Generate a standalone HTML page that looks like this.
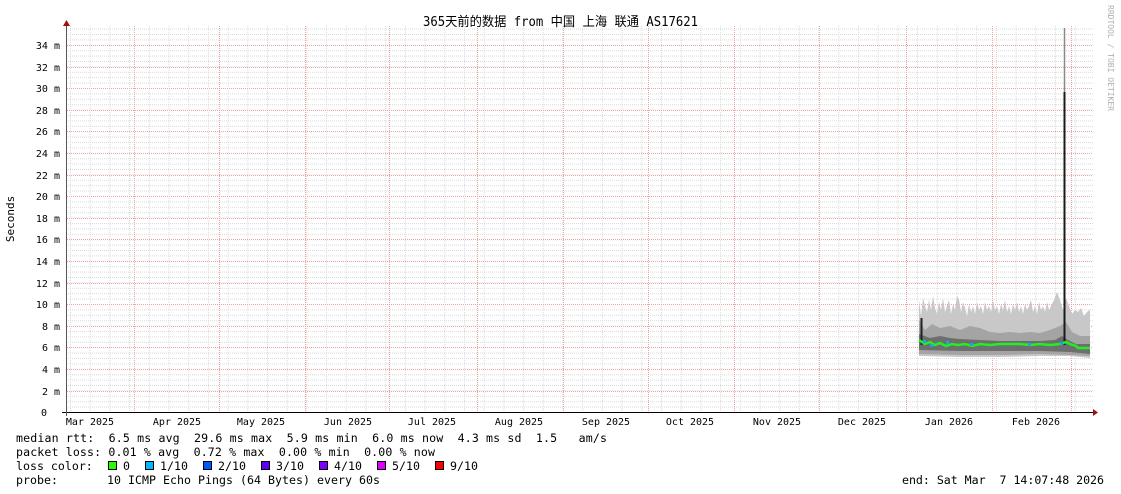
<!DOCTYPE html>
<html><head><meta charset="utf-8"><style>
html,body{margin:0;padding:0;background:#fff;width:1121px;height:494px;overflow:hidden}
svg{display:block}
text{font-family:"DejaVu Sans Mono","Liberation Mono",monospace}
</style></head><body>
<svg width="1121" height="494" xmlns="http://www.w3.org/2000/svg">
<defs>
<pattern id="hmin" x="0" y="412" width="1121" height="5.4" patternUnits="userSpaceOnUse">
<line x1="0" y1="0.5" x2="1121" y2="0.5" stroke="#dadada" stroke-width="1" stroke-dasharray="1,1" shape-rendering="crispEdges"/>
</pattern>
<pattern id="vmin" x="70" y="0" width="19.7" height="500" patternUnits="userSpaceOnUse">
<line x1="0.5" y1="0" x2="0.5" y2="500" stroke="#dadada" stroke-width="1" stroke-dasharray="1,1" shape-rendering="crispEdges"/>
</pattern>
</defs>
<rect width="1121" height="494" fill="#fff"/>
<rect x="67" y="26" width="1026" height="386" fill="url(#hmin)"/>
<rect x="67" y="26" width="1026" height="386" fill="url(#vmin)"/>
<g stroke="#fff" stroke-width="1" shape-rendering="crispEdges">
<line x1="67" y1="45.5" x2="1093" y2="45.5"/><line x1="67" y1="67.5" x2="1093" y2="67.5"/>
<line x1="67" y1="88.5" x2="1093" y2="88.5"/><line x1="67" y1="110.5" x2="1093" y2="110.5"/>
<line x1="67" y1="131.5" x2="1093" y2="131.5"/><line x1="67" y1="153.5" x2="1093" y2="153.5"/>
<line x1="67" y1="175.5" x2="1093" y2="175.5"/><line x1="67" y1="196.5" x2="1093" y2="196.5"/>
<line x1="67" y1="218.5" x2="1093" y2="218.5"/><line x1="67" y1="239.5" x2="1093" y2="239.5"/>
<line x1="67" y1="261.5" x2="1093" y2="261.5"/><line x1="67" y1="283.5" x2="1093" y2="283.5"/>
<line x1="67" y1="304.5" x2="1093" y2="304.5"/><line x1="67" y1="326.5" x2="1093" y2="326.5"/>
<line x1="67" y1="347.5" x2="1093" y2="347.5"/><line x1="67" y1="369.5" x2="1093" y2="369.5"/>
<line x1="67" y1="391.5" x2="1093" y2="391.5"/>
</g>
<g stroke="#f2a0a0" stroke-width="1" stroke-dasharray="1,1" shape-rendering="crispEdges">
<line x1="134.5" y1="26" x2="134.5" y2="412"/><line x1="219.5" y1="26" x2="219.5" y2="412"/>
<line x1="305.5" y1="26" x2="305.5" y2="412"/><line x1="389.5" y1="26" x2="389.5" y2="412"/>
<line x1="477.5" y1="26" x2="477.5" y2="412"/><line x1="563.5" y1="26" x2="563.5" y2="412"/>
<line x1="648.5" y1="26" x2="648.5" y2="412"/><line x1="734.5" y1="26" x2="734.5" y2="412"/>
<line x1="819.5" y1="26" x2="819.5" y2="412"/><line x1="906.5" y1="26" x2="906.5" y2="412"/>
<line x1="992.5" y1="26" x2="992.5" y2="412"/><line x1="1071.5" y1="26" x2="1071.5" y2="412"/>
<line x1="67" y1="45.5" x2="1093" y2="45.5"/><line x1="67" y1="67.5" x2="1093" y2="67.5"/>
<line x1="67" y1="88.5" x2="1093" y2="88.5"/><line x1="67" y1="110.5" x2="1093" y2="110.5"/>
<line x1="67" y1="131.5" x2="1093" y2="131.5"/><line x1="67" y1="153.5" x2="1093" y2="153.5"/>
<line x1="67" y1="175.5" x2="1093" y2="175.5"/><line x1="67" y1="196.5" x2="1093" y2="196.5"/>
<line x1="67" y1="218.5" x2="1093" y2="218.5"/><line x1="67" y1="239.5" x2="1093" y2="239.5"/>
<line x1="67" y1="261.5" x2="1093" y2="261.5"/><line x1="67" y1="283.5" x2="1093" y2="283.5"/>
<line x1="67" y1="304.5" x2="1093" y2="304.5"/><line x1="67" y1="326.5" x2="1093" y2="326.5"/>
<line x1="67" y1="347.5" x2="1093" y2="347.5"/><line x1="67" y1="369.5" x2="1093" y2="369.5"/>
<line x1="67" y1="391.5" x2="1093" y2="391.5"/>
</g>
<!-- smoke -->
<polygon fill="#c8c8c8" points="919,300 921,316 923,298 925,306 927,312 929,300 931,310 933,296 935,308 937,314 939,302 941,310 943,298 945,312 947,306 949,300 951,314 953,304 955,310 957,296 959,300 961,312 963,302 965,308 967,316 969,304 971,312 973,306 975,314 977,302 979,310 981,306 983,314 985,302 987,310 989,306 991,312 993,300 995,310 997,306 999,314 1001,304 1003,310 1005,300 1007,312 1009,306 1011,314 1013,304 1015,310 1017,302 1019,312 1021,306 1023,314 1025,304 1027,310 1029,306 1031,300 1033,312 1035,306 1037,314 1039,302 1041,310 1043,306 1045,312 1047,302 1049,310 1051,306 1054,300 1057,292 1060,300 1063,310 1066,298 1069,306 1072,314 1075,310 1078,312 1081,308 1084,316 1087,312 1090,310 1090,358 1070,356 1040,356 1000,357 960,357 919,356"/>
<polygon fill="#a4a4a4" points="919,320 925,330 932,324 940,328 950,326 960,330 970,326 980,328 990,332 1000,333 1010,332 1020,333 1030,332 1040,333 1050,330 1060,326 1066,322 1072,332 1080,336 1090,336 1090,356 1070,355 1040,354 1000,355 960,355 919,354"/>
<polygon fill="#6e6e6e" points="919,334 930,338 940,336 950,338 960,339 980,340 1000,341 1020,341 1040,341 1055,340 1062,336 1068,340 1076,344 1090,344 1090,354 1070,352 1040,351 1000,351 960,351 919,350"/>
<line x1="921.5" y1="318" x2="921.5" y2="345" stroke="#222" stroke-width="2"/>
<line x1="1064.5" y1="28" x2="1064.5" y2="92" stroke="#888" stroke-width="1.5"/>
<line x1="1064.5" y1="92" x2="1064.5" y2="345" stroke="#1a1a1a" stroke-width="2"/>
<polyline fill="none" stroke="#22ee22" stroke-width="2.5" points="919,340 925,344 930,342 935,345 940,343 946,346 952,344 958,345 965,344 972,346 980,344 990,345 1000,344 1010,344 1020,344 1030,345 1040,344 1050,345 1060,344 1066,342 1070,344 1076,346 1078,348 1090,348"/>
<g fill="#11aaee"><rect x="923" y="340" width="3" height="3"/><rect x="930" y="344" width="3" height="3"/><rect x="946" y="341" width="3" height="3"/><rect x="970" y="343" width="3" height="3"/><rect x="1028" y="343" width="3" height="3"/><rect x="1060" y="342" width="3" height="3"/></g>
<!-- axes -->
<line x1="62" y1="412.5" x2="1093" y2="412.5" stroke="#000" stroke-width="1" shape-rendering="crispEdges"/>
<line x1="66.5" y1="24" x2="66.5" y2="416" stroke="#555" stroke-width="1" shape-rendering="crispEdges"/>
<polygon points="1093,409 1098,412.5 1093,416" fill="#a01010"/>
<polygon points="63,26 66.5,20 70,26" fill="#a01010"/>
<!-- y labels -->
<g font-size="10" fill="#000" text-anchor="end">
<text x="60" y="49">34 m</text><text x="60" y="71">32 m</text><text x="60" y="92">30 m</text>
<text x="60" y="114">28 m</text><text x="60" y="135">26 m</text><text x="60" y="157">24 m</text>
<text x="60" y="179">22 m</text><text x="60" y="200">20 m</text><text x="60" y="222">18 m</text>
<text x="60" y="243">16 m</text><text x="60" y="265">14 m</text><text x="60" y="287">12 m</text>
<text x="60" y="308">10 m</text><text x="60" y="330">8 m</text><text x="60" y="351">6 m</text>
<text x="60" y="373">4 m</text><text x="60" y="395">2 m</text><text x="47" y="416">0</text>
</g>
<text x="14" y="219" font-size="11" text-anchor="middle" transform="rotate(-90 14 219)">Seconds</text>
<!-- x labels -->
<g font-size="10" fill="#000" text-anchor="middle">
<text x="90" y="425">Mar 2025</text><text x="177" y="425">Apr 2025</text><text x="261" y="425">May 2025</text>
<text x="348" y="425">Jun 2025</text><text x="432" y="425">Jul 2025</text><text x="519" y="425">Aug 2025</text>
<text x="606" y="425">Sep 2025</text><text x="690" y="425">Oct 2025</text><text x="777" y="425">Nov 2025</text>
<text x="862" y="425">Dec 2025</text><text x="949" y="425">Jan 2026</text><text x="1036" y="425">Feb 2026</text>
</g>
<text x="423" y="26" font-size="13" textLength="275" lengthAdjust="spacingAndGlyphs" style='font-family:"DejaVu Sans Mono","Noto Sans CJK SC",monospace'>365天前的数据 from 中国 上海 联通 AS17621</text>
<text x="1108" y="5" font-size="8" fill="#b0b0b0" transform="rotate(90 1108 5)">RRDTOOL / TOBI OETIKER</text>
<!-- legend -->
<g font-size="11.6" fill="#000">
<text x="16" y="442" xml:space="preserve" textLength="591" lengthAdjust="spacing">median rtt:  6.5 ms avg  29.6 ms max  5.9 ms min  6.0 ms now  4.3 ms sd  1.5   am/s</text>
<text x="16" y="456" xml:space="preserve" textLength="419" lengthAdjust="spacing">packet loss: 0.01 % avg  0.72 % max  0.00 % min  0.00 % now</text>
<text x="16" y="470" xml:space="preserve">loss color:  </text>
<text x="123" y="470">0</text><text x="160" y="470">1/10</text><text x="218" y="470">2/10</text>
<text x="276" y="470">3/10</text><text x="334" y="470">4/10</text><text x="392" y="470">5/10</text><text x="450" y="470">9/10</text>
<text x="16" y="484" xml:space="preserve" textLength="364" lengthAdjust="spacing">probe:       10 ICMP Echo Pings (64 Bytes) every 60s</text>
<text x="902" y="484" xml:space="preserve" textLength="202" lengthAdjust="spacing">end: Sat Mar  7 14:07:48 2026</text>
</g>
<g stroke="#000" stroke-width="1" shape-rendering="crispEdges">
<rect x="108.5" y="461.5" width="8" height="8" fill="#26ff00"/>
<rect x="145.5" y="461.5" width="8" height="8" fill="#00b8ff"/>
<rect x="203.5" y="461.5" width="8" height="8" fill="#0059ff"/>
<rect x="261.5" y="461.5" width="8" height="8" fill="#5e00ff"/>
<rect x="319.5" y="461.5" width="8" height="8" fill="#7e00ff"/>
<rect x="377.5" y="461.5" width="8" height="8" fill="#dd00ff"/>
<rect x="435.5" y="461.5" width="8" height="8" fill="#ff0000"/>
</g>
</svg>
</body></html>
